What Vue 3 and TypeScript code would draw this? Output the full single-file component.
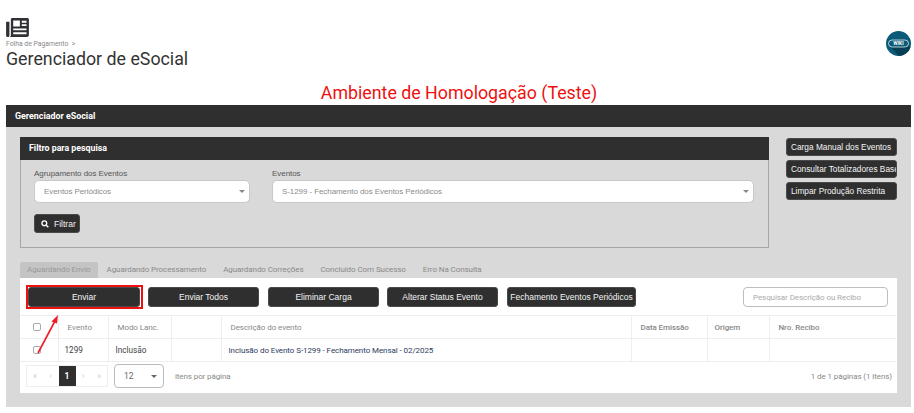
<script setup lang="ts">
const tabs: string[] = ['Aguardando Envio', 'Aguardando Processamento', 'Aguardando Correções', 'Concluído Com Sucesso', 'Erro Na Consulta']
const actions: { label: string; cls: string }[] = [
  { label: 'Enviar', cls: 'a1' },
  { label: 'Enviar Todos', cls: 'a2' },
  { label: 'Eliminar Carga', cls: 'a3' },
  { label: 'Alterar Status Evento', cls: 'a4' },
  { label: 'Fechamento Eventos Periódicos', cls: 'a5' },
]
const side: string[] = ['Carga Manual dos Eventos', 'Consultar Totalizadores Base', 'Limpar Produção Restrita']
const headers: string[] = ['Evento', 'Modo Lanc.', '', 'Descrição do evento', 'Data Emissão', 'Origem', 'Nro. Recibo']
</script>

<template>
  <div class="page">
    <header class="top">
      <div class="top-left">
        <svg class="news" viewBox="0 0 24 20" width="23" height="19">
          <path fill="#2f3136" d="M5 1.5C5 .7 5.700 0 6.500 0H22.500C23.300 0 24 .7 24 1.500V18C24 19.100 23.100 20 22 20H3.500C4.400 20 5 19.300 5 18.500ZM7.500 2.500V9H14.500V2.500ZM16.500 3V5H21.500V3ZM16.500 6.500V8.500H21.500V6.500ZM7.500 11V13H21.500V11ZM7.500 15V17H21.500V15ZM0 4H3.500V18.300C3.500 19.200 2.800 20 1.800 20S0 19.200 0 18.300Z" />
        </svg>
        <div class="crumb">Folha de Pagamento &nbsp;&gt;</div>
        <h1>Gerenciador de eSocial</h1>
      </div>
      <svg class="wiki" viewBox="0 0 25 25" width="25" height="25">
        <circle cx="12.500" cy="12.500" r="12.500" fill="#0b5a78" />
        <path d="M4 15L13 25A12.500 12.500 0 0 0 24.500 16L22 15Z" fill="#073f56" />
        <rect x="2.500" y="9" width="20" height="7" rx="3.500" fill="#0b5a78" stroke="#dfe9ee" stroke-width="0.800" />
        <text x="12.500" y="14.200" text-anchor="middle" class="wiki-t">WIKI</text>
      </svg>
    </header>

    <div class="env">Ambiente de Homologação (Teste)</div>

    <section class="panel">
      <div class="panel-head">Gerenciador eSocial</div>
      <div class="panel-body">
        <div class="upper">
          <div class="filter">
            <div class="filter-head">Filtro para pesquisa</div>
            <div class="filter-body">
              <div class="fields">
                <label class="field f1">
                  <span class="lbl">Agrupamento dos Eventos</span>
                  <span class="sel">Eventos Periódicos<i class="caret"></i></span>
                </label>
                <label class="field f2">
                  <span class="lbl">Eventos</span>
                  <span class="sel">S-1299 - Fechamento dos Eventos Periódicos<i class="caret"></i></span>
                </label>
              </div>
              <button class="btn filtrar">
                <svg viewBox="0 0 12 12" width="8" height="8"><circle cx="5" cy="5" r="3.600" fill="none" stroke="#fff" stroke-width="2" /><path d="M7.800 7.800L11 11" stroke="#fff" stroke-width="2" /></svg>
                Filtrar
              </button>
            </div>
          </div>
          <div class="side">
            <button v-for="s in side" :key="s" class="btn side-btn">{{ s }}</button>
          </div>
        </div>

        <nav class="tabs">
          <span v-for="(t, i) in tabs" :key="t" class="tab" :class="{ active: i === 0 }">{{ t }}</span>
        </nav>

        <div class="card">
          <div class="actions">
            <button v-for="a in actions" :key="a.label" class="btn act" :class="a.cls">{{ a.label }}</button>
            <input class="search" placeholder="Pesquisar Descrição ou Recibo" />
          </div>
          <table>
            <colgroup>
              <col class="c0" /><col class="c1" /><col class="c2" /><col class="c3" /><col class="c4" /><col class="c5" /><col class="c6" /><col class="c7" />
            </colgroup>
            <thead>
              <tr>
                <th class="chk"><span class="box"></span></th>
                <th v-for="(h, i) in headers" :key="i" :class="'h' + i">{{ h }}</th>
              </tr>
            </thead>
            <tbody>
              <tr>
                <td class="chk"><span class="box"></span></td>
                <td class="num">1299</td>
                <td>Inclusão</td>
                <td></td>
                <td class="desc">Inclusão do Evento S-1299 - Fechamento Mensal - 02/2025</td>
                <td></td>
                <td></td>
                <td></td>
              </tr>
            </tbody>
          </table>
          <div class="foot">
            <div class="pager">
              <span>«</span><span>‹</span><span class="cur">1</span><span>›</span><span>»</span>
            </div>
            <span class="size">12<i class="caret dark"></i></span>
            <span class="per">itens por página</span>
            <span class="count">1 de 1 páginas (1 itens)</span>
          </div>
        </div>
      </div>
    </section>

    <svg class="arrow" viewBox="0 0 36 45" width="36" height="45">
      <path d="M12 42L28.500 11" stroke="#ee1c25" stroke-width="1.600" fill="none" />
      <path d="M32 4L25.500 10.500L31 12.500Z" fill="#ee1c25" />
    </svg>
  </div>
</template>

<style>
html, body { margin: 0; background: #fff; }
</style>

<style scoped>
* { box-sizing: border-box; }
.page {
  position: relative;
  width: 914px;
  height: 413px;
  overflow: hidden;
  background: #fff;
  font-family: Roboto, "Liberation Sans", sans-serif;
  color: #333;
}
.top {
  display: flex;
  justify-content: space-between;
  align-items: flex-start;
  height: 82px;
  padding: 18px 3px 0 6px;
}
.news { display: block; }
.crumb { margin-top: 3px; font-size: 6.800px; line-height: 8px; color: #888; }
h1 { margin: 0; font-size: 17.800px; line-height: 21px; font-weight: 400; color: #333; }
.wiki { margin-top: 13px; }
.wiki-t { font: 700 5px Roboto, sans-serif; fill: #fff; }
.env { height: 23px; padding-left: 4px; text-align: center; font-size: 17.800px; line-height: 21px; color: #ee1111; }
.panel { margin: 0 3px 0 6px; }
.panel-head {
  height: 22px;
  padding-left: 9px;
  background: #2f2f2f;
  color: #fff;
  font: 700 8.900px/22px Roboto, sans-serif;
}
.panel-body { height: 280px; padding: 10px 14px 0; background: #d9d9d9; }
.upper { display: flex; align-items: flex-start; height: 125px; }
.filter { width: 749px; height: 111px; border: 1px solid #a6a6a6; border-top: 0; }
.filter-head {
  height: 23px;
  margin: 0 -1px;
  padding-left: 9px;
  background: #2f2f2f;
  color: #fff;
  font: 700 8.800px/23px Roboto, sans-serif;
}
.filter-body { padding: 9px 14px 0 13px; }
.fields { display: flex; gap: 22px; }
.field { display: block; }
.f1 { width: 216px; }
.f2 { width: 482px; }
.lbl { display: block; margin-bottom: 1px; font: 400 8px/10px "Liberation Sans", sans-serif; letter-spacing: -.05px; color: #555; }
.sel {
  position: relative;
  display: block;
  height: 23px;
  padding-left: 9px;
  background: #fff;
  border: 1px solid #c8c8c8;
  border-radius: 5px;
  font: 400 8px/21px "Liberation Sans", sans-serif;
  letter-spacing: -.08px;
  color: #8c8c8c;
}
.caret {
  position: absolute;
  right: 4px;
  top: 9px;
  border: 3.500px solid transparent;
  border-top: 3.500px solid #888;
  border-bottom: 0;
}
.caret.dark { right: 6px; top: 10px; border-top-color: #666; }
.btn {
  display: block;
  padding: 0;
  border: 1px solid #4a4a4a;
  border-radius: 3px;
  background: #2f2f2f;
  color: #f4f4f4;
  font: 400 9px "Liberation Sans", sans-serif;
  white-space: nowrap;
  overflow: hidden;
}
.filtrar {
  display: flex;
  align-items: center;
  gap: 5px;
  width: 46px;
  height: 19px;
  margin-top: 11px;
  padding-left: 6px;
  font-size: 8.500px;
}
.side { display: flex; flex-direction: column; gap: 4px; margin: 1px 0 0 17px; }
.side-btn { width: 111px; height: 18px; padding-left: 4px; text-align: left; font-size: 8.300px; }
.tabs { display: flex; height: 16px; }
.tab { padding: 0 8px; margin-right: 1px; font: 400 8px/16px Roboto, sans-serif; letter-spacing: -.08px; color: #8a8a8a; }
.tab.active { padding: 0 7px; background: #c4c4c4; border-radius: 2px 2px 0 0; color: #999; }
.card { position: relative; width: 877px; height: 115px; background: #fff; padding-top: 9px; }
.actions { display: flex; height: 20px; padding-left: 8px; }
.act { height: 20px; width: 111px; margin-right: 9px; font-size: 8.500px; }
.a1 { position: relative; width: 112px; margin-right: 8px; overflow: visible; }
.a1::after {
  content: "";
  position: absolute;
  inset: -3px -4px -3px -3px;
  border: 2px solid #ee0f0f;
}
.a3 { margin-right: 8px; }
.a5 { width: 129px; margin-right: 107px; }
.search {
  width: 145px;
  height: 20px;
  padding: 0 9px;
  border: 1px solid #bdbdbd;
  border-radius: 4px;
  outline: 0;
  font: 400 8px Roboto, sans-serif;
  letter-spacing: -.08px;
}
.search::placeholder { color: #aaa; opacity: 1; }
table { margin: 8px 0 0 0; width: 876px; height: 46px; table-layout: fixed; border-collapse: collapse; border-top: 1px solid #eee; }
th, td { height: 23px; padding: 0 0 0 7px; border: 1px solid #eee; border-top: 0; font-size: 8.200px; text-align: left; white-space: nowrap; overflow: hidden; }
th:first-child, td:first-child { border-left: 0; }
th:last-child, td:last-child { border-right: 0; }
th { font-size: 8px; letter-spacing: -.08px; font-weight: 500; color: #888; }
.h0 { font-weight: 400; padding-left: 9px; letter-spacing: .1px; }
.h1, .h3 { font-weight: 400; }
.h1, .h3, .h4, .h6 { padding-left: 9px; }
td { color: #444; }
td.desc { font-size: 8px; letter-spacing: -.08px; color: #2b3b60; padding-left: 7px; }
td.num { padding-left: 6px; }
.c0 { width: 38px; }
.c1 { width: 50px; }
.c2 { width: 63px; }
.c3 { width: 50px; }
.c4 { width: 410px; }
.c5 { width: 76px; }
.c6 { width: 62px; }
.c7 { width: 127px; }
.chk { padding: 0 0 0 13px; }
.box { display: block; width: 8px; height: 8px; border: 1px solid #aaa; border-radius: 2px; background: #fff; }
.foot { display: flex; align-items: center; height: 32px; padding: 0 5px 4px 6px; }
.pager { display: flex; width: 82px; height: 22px; border: 1px solid #eee; }
.pager span { flex: 1; font-size: 8.500px; line-height: 20px; text-align: center; color: #ccc; }
.pager .cur { flex: 0 0 17px; background: #2f2f2f; color: #fff; font-weight: 700; }
.size {
  position: relative;
  width: 50px;
  height: 24px;
  margin-left: 6px;
  padding-left: 9px;
  border: 1px solid #bbb;
  border-radius: 4px;
  font-size: 8.500px;
  line-height: 22px;
  color: #666;
}
.per { margin-left: 11px; font-size: 8px; letter-spacing: -.1px; color: #888; }
.count { margin-left: auto; font-size: 8px; letter-spacing: -.08px; color: #888; }
.arrow { position: absolute; left: 26px; top: 311px; }
</style>
